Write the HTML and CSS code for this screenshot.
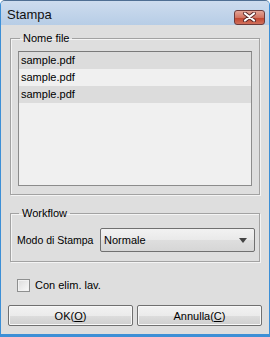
FILE: index.html
```html
<!DOCTYPE html>
<html lang="it">

<head>
    <meta charset="UTF-8">
    <meta name="viewport" content="width=device-width, initial-scale=1.0">
    <title>Stampa</title>
    <link rel="stylesheet" href="styles.css">
</head>

<body>
    <div class="window">
        <div class="titlebar">
            <span class="title">Stampa</span>
            <button class="close" type="button" aria-label="Chiudi">
                <svg width="15" height="10" viewBox="0 0 15 10">
                    <path d="M3 1.5 L12 8.5 M12 1.5 L3 8.5" stroke="#5a2a2a" stroke-width="4" stroke-linecap="round" />
                    <path d="M3 1.5 L12 8.5 M12 1.5 L3 8.5" stroke="#ffffff" stroke-width="2.2" stroke-linecap="round" />
                </svg>
            </button>
        </div>

        <div class="content">
            <fieldset class="group files">
                <legend>Nome file</legend>
                <div class="listbox">
                    <div class="item odd">sample.pdf</div>
                    <div class="item">sample.pdf</div>
                    <div class="item odd">sample.pdf</div>
                </div>
            </fieldset>

            <fieldset class="group workflow">
                <legend>Workflow</legend>
                <div class="row">
                    <span class="label">Modo di Stampa</span>
                    <div class="combo">
                        <span>Normale</span>
                        <span class="arrow"></span>
                    </div>
                </div>
            </fieldset>

            <label class="check">
                <span class="box"></span>
                <span>Con elim. lav.</span>
            </label>

            <div class="buttons">
                <button type="button" class="btn">OK(<u>O</u>)</button>
                <button type="button" class="btn">Annulla(<u>C</u>)</button>
            </div>
        </div>
    </div>
</body>

</html>
```

FILE: styles.css
```css
body {
    margin: 0;
    padding: 0;
    font-family: "Liberation Sans", Arial, sans-serif;
    font-size: 11px;
    color: #000;
    background-color: #ffffff;
}

.window {
    width: 270px;
    height: 337px;
    box-sizing: border-box;
    background-color: #dedede;
    border: 1px solid #4f6f93;
    border-bottom: 3px solid #3d8fd6;
    border-left-color: #3d8fd6;
    border-right-color: #3d8fd6;
    border-radius: 5px 5px 0 0;
    overflow: hidden;
}

.titlebar {
    height: 24px;
    display: flex;
    align-items: center;
    justify-content: space-between;
    padding: 0 4px 0 6px;
    background: linear-gradient(#cddcee, #b7cde6);
}

.title {
    font-size: 13px;
    margin-top: 2px;
    color: #111;
}

.close {
    width: 31px;
    height: 15px;
    margin-top: 8px;
    padding: 0;
    display: flex;
    align-items: center;
    justify-content: center;
    border: 1px solid #6d3b3b;
    border-radius: 3px;
    background: linear-gradient(#e4a597, #d27462 50%, #c0422c 51%, #d0705c);
}

.content {
    padding: 0 9px 0 9px;
}

.group {
    margin: 0;
    border: 1px solid #a2a2a2;
    box-shadow: inset 1px 1px 0 #f4f4f4, 1px 1px 0 #f4f4f4;
    min-width: 0;
}

.group legend {
    padding: 0 3px;
    margin-left: 2px;
    line-height: 13px;
}

.files {
    margin-top: 7px;
    padding: 6px 7px 8px 7px;
}

.listbox {
    height: 133px;
    background-color: #f0f0f0;
    border: 1px solid #8c8c8c;
    border-top-color: #7a7a7a;
}

.item {
    height: 17px;
    line-height: 17px;
    padding-left: 2px;
}

.item.odd {
    background-color: #dcdcdc;
}

.workflow {
    margin-top: 12px;
    padding: 8px 4px 9px 6px;
}

.row {
    display: flex;
    align-items: center;
}

.label {
    width: 83px;
    font-size: 10.5px;
}

.combo {
    flex: 1;
    height: 22px;
    display: flex;
    align-items: center;
    justify-content: space-between;
    padding: 0 7px 0 3px;
    border: 1px solid #707070;
    border-radius: 2px;
    background: linear-gradient(#f2f2f2, #e9e9e9 50%, #dedede 51%, #d6d6d6);
}

.arrow {
    width: 0;
    height: 0;
    border-left: 4px solid transparent;
    border-right: 4px solid transparent;
    border-top: 5px solid #444;
}

.check {
    display: flex;
    align-items: center;
    gap: 5px;
    margin: 16px 0 0 7px;
    height: 14px;
}

.box {
    width: 11px;
    height: 11px;
    border: 1px solid #8e8f8f;
    background: linear-gradient(135deg, #dcdcdc, #fafafa);
    box-shadow: inset 0 0 0 1px #f2f2f2;
}

.buttons {
    display: flex;
    gap: 4px;
    margin: 13px -2px 0 -2px;
}

.btn {
    flex: 1;
    height: 21px;
    padding: 0;
    font-family: "Liberation Sans", Arial, sans-serif;
    font-size: 11px;
    color: #000;
    border: 1px solid #707070;
    border-radius: 2px;
    background: linear-gradient(#f2f2f2, #ebebeb 50%, #dddddd 51%, #cfcfcf);
    box-shadow: inset 0 0 0 1px #f8f8f8;
}

.btn u {
    text-decoration: underline;
}
```
